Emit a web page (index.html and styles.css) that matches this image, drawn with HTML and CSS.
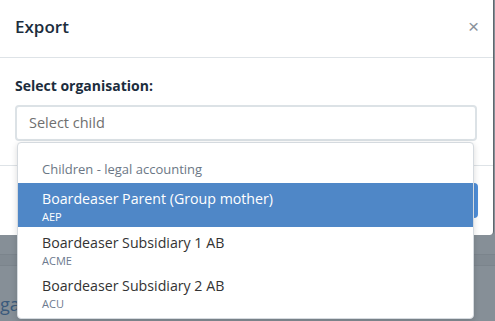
FILE: index.html
```html
<!doctype html>
<html lang="en">

<head>
  <meta charset="utf-8">
  <title>Export</title>
  <link rel="stylesheet" href="styles.css">
</head>

<body>
  <div class="page">
    <div class="page-top"></div>
    <div class="page-bar"></div>
    <div class="page-rows">
      <a class="page-link" href="#">ga</a>
    </div>
  </div>

  <div class="modal">
    <div class="modal-header">
      <h1>Export</h1>
      <button class="close">&times;</button>
    </div>
    <div class="modal-body">
      <label class="field-label">Select organisation:</label>
      <div class="select-wrap">
        <div class="select-input">Select child</div>
        <div class="menu">
          <div class="menu-group">Children - legal accounting</div>
          <div class="option selected">
            <div class="option-name">Boardeaser Parent (Group mother)</div>
            <div class="option-code">AEP</div>
          </div>
          <div class="option">
            <div class="option-name">Boardeaser Subsidiary 1 AB</div>
            <div class="option-code">ACME</div>
          </div>
          <div class="option">
            <div class="option-name">Boardeaser Subsidiary 2 AB</div>
            <div class="option-code">ACU</div>
          </div>
        </div>
      </div>
    </div>
    <div class="modal-footer">
      <button class="btn">Export</button>
    </div>
  </div>
</body>

</html>
```

FILE: styles.css
```css
body {
  margin: 0;
  background: #868f97;
  font-family: "Open Sans", "Noto Sans", sans-serif;
  overflow: hidden;
  height: 321px;
}

.page-top {
  height: 254px;
}

.page-bar {
  height: 10px;
  background: #818a92;
  border-top: 1px solid #7b848c;
  border-bottom: 1px solid #7b848c;
}

.page-rows {
  padding-top: 26px;
}

.page-link {
  display: block;
  color: #3a5a7c;
  font-size: 18px;
  text-decoration: none;
}

/* modal sits over the page */
.modal {
  position: absolute;
  top: -4px;
  left: -10px;
  width: 503px;
  background: #fff;
  border-radius: 4px;
  border-right: 1px solid #5f676e;
}

.modal-header {
  display: flex;
  justify-content: space-between;
  align-items: center;
  height: 61px;
  padding: 0 14px 0 25px;
  border-bottom: 1px solid #dee3e7;
}

.modal-header h1 {
  margin: 0;
  font-size: 17px;
  font-weight: 600;
  color: #1c2d3d;
}

.close {
  border: none;
  background: none;
  color: #8a929a;
  font-size: 19px;
  padding: 0;
  cursor: pointer;
}

.modal-body {
  padding: 18px 16px 24px 25px;
  border-bottom: 1px solid #dee3e7;
}

.field-label {
  display: block;
  font-size: 14px;
  font-weight: 700;
  color: #1c2d3d;
  margin-bottom: 10px;
}

.select-wrap {
  position: relative;
}

.select-input {
  height: 32px;
  line-height: 32px;
  border: 2px solid #dce2e6;
  border-radius: 4px;
  padding-left: 12px;
  font-size: 14.5px;
  color: #6f6f6f;
}

.menu {
  position: absolute;
  top: 37px;
  left: 2px;
  right: 3px;
  z-index: 5;
  background: #fff;
  border: 1px solid #d5dadf;
  border-radius: 4px;
  box-shadow: 0 2px 6px rgb(0 0 0 / 0.15);
  padding: 8px 0 5px;
}

.menu-group {
  padding: 9px 24px 0;
  height: 32px;
  box-sizing: border-box;
  font-size: 13px;
  color: #6b7785;
}

.option {
  padding: 6px 24px 0;
  height: 43px;
  box-sizing: border-box;
}

.option-name {
  font-size: 14.2px;
  color: #333;
  line-height: 20px;
}

.option-code {
  font-size: 11px;
  color: #6c7a8e;
  line-height: 16px;
}

.option.selected {
  background: #4f87c7;
  height: 44px;
}

.option.selected .option-name,
.option.selected .option-code {
  color: #fff;
}

.modal-footer {
  display: flex;
  justify-content: flex-end;
  padding: 17px 15px 17px;
}

.btn {
  height: 35px;
  padding: 0 20px;
  border: none;
  border-radius: 4px;
  background: #4f8ed8;
  color: #fff;
  font-size: 14px;
}
```
